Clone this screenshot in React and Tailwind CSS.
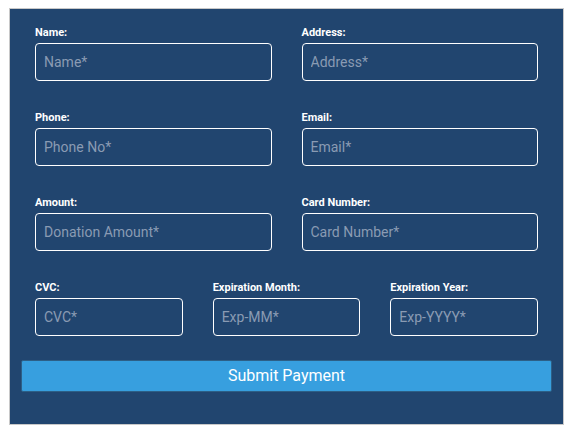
const font = { fontFamily: 'Roboto, "Liberation Sans", sans-serif' };

function Field({ label, placeholder }) {
  return (
    <div className="flex flex-col">
      <label className="h-[16px] mb-[2px] text-[11px] leading-[15px] font-bold text-white">{label}</label>
      <input
        className="h-[38px] w-full rounded-[4px] border border-white bg-transparent pl-[8px] text-[14px] text-white outline-none placeholder:text-[#8a9bb3]"
        placeholder={placeholder}
      />
    </div>
  );
}

export default function App() {
  return (
    <div className="w-[571px] h-[435px] bg-white pl-[9px] pt-[8px]" style={font}>
      <div className="w-[555px] border border-[#c8c8c8] bg-[#21456f] px-[11px] pt-[16px] pb-[32px]">
        {/* 2열 행 */}
        <div className="grid grid-cols-2 gap-x-[30px] px-[14px] mb-[29px]">
          <Field label="Name:" placeholder="Name*" />
          <Field label="Address:" placeholder="Address*" />
        </div>
        <div className="grid grid-cols-2 gap-x-[30px] px-[14px] mb-[29px]">
          <Field label="Phone:" placeholder="Phone No*" />
          <Field label="Email:" placeholder="Email*" />
        </div>
        <div className="grid grid-cols-2 gap-x-[30px] px-[14px] mb-[29px]">
          <Field label="Amount:" placeholder="Donation Amount*" />
          <Field label="Card Number:" placeholder="Card Number*" />
        </div>
        {/* 3열 행 */}
        <div className="grid grid-cols-3 gap-x-[30px] px-[14px] mb-[24px]">
          <Field label="CVC:" placeholder="CVC*" />
          <Field label="Expiration Month:" placeholder="Exp-MM*" />
          <Field label="Expiration Year:" placeholder="Exp-YYYY*" />
        </div>
        <button className="h-[32px] w-full rounded-[2px] border border-[#2d5f86] bg-[#379fdf] text-[16px] text-white">
          Submit Payment
        </button>
      </div>
    </div>
  );
}
